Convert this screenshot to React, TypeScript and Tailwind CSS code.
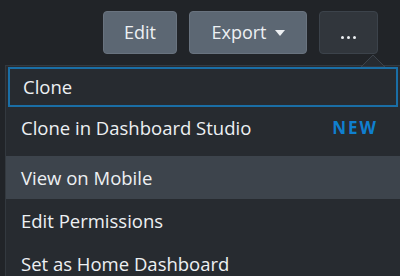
import React from "react";

const items = [
  { label: "Clone", focused: true },
  { label: "Clone in Dashboard Studio", badge: "NEW" },
];

const items2 = [
  { label: "View on Mobile", hover: true },
  { label: "Edit Permissions" },
  { label: "Set as Home Dashboard" },
];

export default function App() {
  return (
    <div
      className="w-[400px] h-[276px] overflow-hidden bg-[#212428] text-[#edf0f3]"
      style={{ fontFamily: "'Open Sans', Lato, sans-serif" }}
    >
      {/* toolbar */}
      <div className="h-[65px] flex items-start justify-end gap-3 pt-[11px] pr-[22px]">
        <button className="h-[43px] w-[74px] rounded-[4px] bg-[#5c6773] border border-[#69737f] text-[18px]">
          Edit
        </button>
        <button className="h-[43px] w-[118px] rounded-[4px] bg-[#5c6773] border border-[#69737f] text-[18px] flex items-center justify-center gap-2">
          Export
          <svg width="10" height="6" viewBox="0 0 10 6">
            <path d="M0 0h10L5 6z" fill="#edf0f3" />
          </svg>
        </button>
        <div className="relative">
          <button className="h-[43px] w-[59px] rounded-[4px] bg-[#31363c] border border-[#3c434b] flex items-center justify-center gap-[3px] pt-[10px]">
            <span className="w-[3px] h-[3px] rounded-full bg-[#edf0f3]" />
            <span className="w-[3px] h-[3px] rounded-full bg-[#edf0f3]" />
            <span className="w-[3px] h-[3px] rounded-full bg-[#edf0f3]" />
          </button>
          {/* caret pointing to the menu */}
          <svg
            className="absolute left-[42px] top-[44px]"
            width="24"
            height="12"
            viewBox="0 0 24 12"
          >
            <path d="M0 12 L12 0 L24 12 Z" fill="#272b30" stroke="#3c434b" />
          </svg>
        </div>
      </div>

      {/* dropdown menu */}
      <div className="ml-[5px] border-l border-t border-[#33393f] bg-[#272b30]">
        {items.map((it) => (
          <div
            key={it.label}
            className={`flex items-center justify-between pr-[22px] ${
              it.focused
                ? "h-[40px] mx-[2px] mt-[1px] border-2 border-[#1a6ea5] pl-[13px]"
                : "h-[42px] pl-[15px]"
            } text-[18.5px]`}
          >
            <span>{it.label}</span>
            {it.badge && (
              <span className="text-[#0f7fcf] font-bold tracking-[2px] text-[17px]">
                {it.badge}
              </span>
            )}
          </div>
        ))}
        <div className="h-[7px]" />
        {items2.map((it) => (
          <div
            key={it.label}
            className={`flex items-center h-[43px] pl-[15px] text-[18.5px] ${
              it.hover ? "bg-[#3d444c]" : ""
            }`}
          >
            {it.label}
          </div>
        ))}
      </div>
    </div>
  );
}
